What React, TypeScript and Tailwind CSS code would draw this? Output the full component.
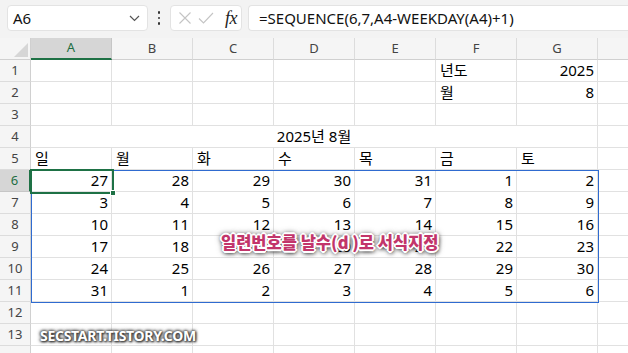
import React from "react";

const cols = ["A", "B", "C", "D", "E", "F", "G"];
const data: number[][] = [
  [27, 28, 29, 30, 31, 1, 2],
  [3, 4, 5, 6, 7, 8, 9],
  [10, 11, 12, 13, 14, 15, 16],
  [17, 18, 19, 20, 21, 22, 23],
  [24, 25, 26, 27, 28, 29, 30],
  [31, 1, 2, 3, 4, 5, 6],
];
const days = ["일", "월", "화", "수", "목", "금", "토"];

const cellFont = "[font-family:'Noto_Sans','Noto_Sans_CJK_KR',sans-serif]";

function RowHeader({ n, active, hide }: { n: number; active?: boolean; hide?: boolean }) {
  return (
    <div
      className={
        "flex items-center justify-center text-[13px] [font-family:'Noto_Sans',sans-serif] border-b " +
        (active
          ? "bg-[#d6d6d6] text-[#1e6e42] border-r-2 border-r-[#1e7145] border-b-[#c6c6c6]"
          : "bg-[#f5f5f5] text-[#444] border-r border-r-[#d0d0d0] border-b-[#dcdcdc]")
      }
    >
      {hide ? null : n}
    </div>
  );
}

function Cell({
  children,
  right,
  noRight,
  className = "",
}: {
  children?: React.ReactNode;
  right?: boolean;
  noRight?: boolean;
  className?: string;
}) {
  return (
    <div
      className={
        "flex items-end pb-[1px] text-[15px] leading-[20px] text-black border-b border-[#e1e1e1] overflow-visible whitespace-nowrap " +
        (noRight ? "" : "border-r ") +
        (right ? "justify-end pr-[3px] " : "justify-start pl-[4px] ") +
        cellFont +
        " " +
        className
      }
    >
      {children}
    </div>
  );
}

export default function App() {
  const rows: React.ReactNode[] = [];
  for (let r = 1; r <= 14; r++) {
    rows.push(<RowHeader key={"h" + r} n={r} active={r === 6} hide={r === 14} />);
    if (r === 4) {
      rows.push(
        <div
          key="m4"
          className={
            "col-span-7 flex items-end justify-center pb-[1px] text-[15px] leading-[20px] border-b border-r border-[#e1e1e1] " +
            cellFont
          }
        >
          2025년 8월
        </div>
      );
      rows.push(<Cell key="h4x" noRight />);
      continue;
    }
    for (let c = 0; c < 7; c++) {
      let content: React.ReactNode = null;
      let right = false;
      if (r === 1 && c === 5) content = "년도";
      if (r === 1 && c === 6) {
        content = "2025";
        right = true;
      }
      if (r === 2 && c === 5) content = "월";
      if (r === 2 && c === 6) {
        content = "8";
        right = true;
      }
      if (r === 5) content = days[c];
      if (r >= 6 && r <= 11) {
        content = data[r - 6][c];
        right = true;
      }
      rows.push(
        <Cell key={r + "-" + c} right={right}>
          {content}
        </Cell>
      );
    }
    rows.push(<Cell key={r + "-x"} noRight />);
  }

  return (
    <div className="relative w-[628px] h-[353px] overflow-hidden bg-white [font-family:'Noto_Sans',sans-serif]">
      {/* Top formula bar */}
      <div className="h-[38px] bg-[#f3f3f3] flex items-start pt-[5px] pl-[7px]">
        <div className="w-[141px] h-[26px] bg-white rounded-[4px] border border-[#e3e3e3] flex items-center justify-between pl-[5px] pr-[7px]">
          <span className="text-[15px] text-[#111]">A6</span>
          <svg width="11" height="7" viewBox="0 0 11 7">
            <path d="M1 1 L5.5 5.5 L10 1" fill="none" stroke="#555" strokeWidth="1.2" />
          </svg>
        </div>
        <div className="w-[22px] h-[26px] flex flex-col items-center justify-center gap-[3px]">
          <span className="w-[2.5px] h-[2.5px] rounded-full bg-[#333]" />
          <span className="w-[2.5px] h-[2.5px] rounded-full bg-[#333]" />
          <span className="w-[2.5px] h-[2.5px] rounded-full bg-[#333]" />
        </div>
        <div className="w-[72px] h-[26px] bg-white rounded-[4px] border border-[#e3e3e3] flex items-center pl-[7px] gap-[6px]">
          <svg width="14" height="14" viewBox="0 0 14 14">
            <path d="M1.5 1.5 L12.5 12.5 M12.5 1.5 L1.5 12.5" stroke="#c4c4c4" strokeWidth="1.1" />
          </svg>
          <svg width="16" height="14" viewBox="0 0 16 14">
            <path d="M1 7.5 L5.5 12 L15 2" fill="none" stroke="#c4c4c4" strokeWidth="1.1" />
          </svg>
          <span className="ml-[5px] text-[18px] leading-none italic text-[#222] [font-family:'Liberation_Serif',serif] tracking-[-0.5px]">
            fx
          </span>
        </div>
        <div className="ml-[6px] flex-1 h-[26px] bg-white rounded-l-[4px] border border-r-0 border-[#e3e3e3] flex items-center pl-[10px]">
          <span className="text-[15px] text-[#111] whitespace-nowrap">=SEQUENCE(6,7,A4-WEEKDAY(A4)+1)</span>
        </div>
      </div>

      {/* Grid */}
      <div className="grid grid-cols-[31px_repeat(7,81px)_1fr] auto-rows-[22px]">
        <div className="relative bg-[#f5f5f5] border-r border-b border-[#d0d0d0]">
          <div className="absolute right-[2px] bottom-[2px] w-0 h-0 border-l-[14px] border-l-transparent border-b-[14px] border-b-[#d6d6d6]" />
        </div>
        {cols.map((c, i) => (
          <div
            key={c}
            className={
              "flex items-center justify-center text-[13px] " +
              (i === 0
                ? "bg-[#d6d6d6] text-[#1e6e42] border-b-2 border-b-[#1e7145] border-r border-r-[#c6c6c6]"
                : "bg-[#f5f5f5] text-[#444] border-b border-b-[#d0d0d0] border-r border-r-[#dcdcdc]")
            }
          >
            {c}
          </div>
        ))}
        <div className="bg-[#f5f5f5] border-b border-[#d0d0d0]" />
        {rows}
      </div>

      {/* Spill range border A6:G11 */}
      <div className="absolute left-[31px] top-[170px] w-[568px] h-[133px] border border-[#2f6bd0] pointer-events-none" />
      {/* Active cell A6 */}
      <div className="absolute left-[30px] top-[169px] w-[84px] h-[25px] border-2 border-[#1e7145] pointer-events-none" />
      <div className="absolute left-[110px] top-[190px] w-[6px] h-[6px] bg-[#1e7145] border border-white pointer-events-none" />

      {/* Overlay caption */}
      <div className="absolute left-[221px] top-[230px] text-[16.5px] font-extrabold leading-[24px] text-[#c2356a] whitespace-nowrap [font-family:'Noto_Sans_CJK_KR',sans-serif] [text-shadow:1px_0_0_#fff,-1px_0_0_#fff,0_1px_0_#fff,0_-1px_0_#fff,1px_1px_0_#fff,-1px_-1px_0_#fff,1px_-1px_0_#fff,-1px_1px_0_#fff,2px_0_0_#fff,0_2px_0_#fff,-2px_0_0_#fff,0_-2px_0_#fff,0_0_5px_#222,1px_2px_4px_#111,0_0_7px_#555]">
        일련번호를 날수(d )로 서식지정
      </div>

      {/* Watermark */}
      <div className="absolute left-[40px] top-[326px] text-[14px] font-bold leading-[20px] tracking-[-0.3px] text-white whitespace-nowrap [font-family:'Noto_Sans',sans-serif] [text-shadow:0_0_3px_#444,0_0_3px_#444,0_0_4px_#555,1px_1px_2px_#333]">
        SECSTART.TISTORY.COM
      </div>
    </div>
  );
}
